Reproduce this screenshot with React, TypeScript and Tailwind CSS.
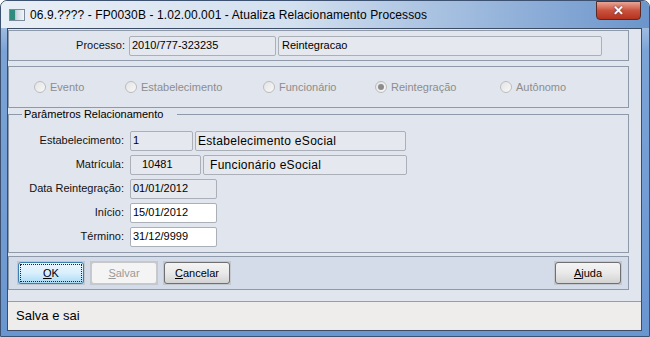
import React from 'react';

const font = { fontFamily: '"Liberation Sans", Arial, sans-serif' };

// Read-only / editable text box
function Box({
  w,
  value,
  white = false,
  big = false,
  className = '',
}: {
  w: string;
  value: string;
  white?: boolean;
  big?: boolean;
  className?: string;
}) {
  return (
    <div
      className={`${w} h-[20px] flex items-center rounded-[2px] border border-[#abb0b8] px-[2px] text-black ${
        white ? 'bg-white' : 'bg-[#e5e8ee]'
      } ${big ? 'text-[12px] tracking-[0.3px]' : 'text-[11px]'} ${className}`}
    >
      {value}
    </div>
  );
}

function Radio({ label, checked = false, w }: { label: string; checked?: boolean; w: string }) {
  return (
    <div className={`${w} flex items-center gap-[4px]`}>
      <span className="w-[12px] h-[12px] rounded-full border border-[#bcbcbc] bg-gradient-to-br from-[#e4e4e4] to-[#f8f8f8] flex items-center justify-center">
        {checked && <span className="w-[6px] h-[6px] rounded-full bg-[#8c8c8c]" />}
      </span>
      <span className="text-[11px] text-[#8d8d8d]">{label}</span>
    </div>
  );
}

function Field({ label, children }: { label: string; children: React.ReactNode }) {
  return (
    <div className="flex items-center h-[20px]">
      <span className="w-[116px] text-right text-[11px] text-[#111] pr-[1px]">{label}</span>
      <div className="flex items-center gap-[2px] ml-[5px]">{children}</div>
    </div>
  );
}

function Btn({
  label,
  u,
  focused = false,
  disabled = false,
}: {
  label: string;
  u: number;
  focused?: boolean;
  disabled?: boolean;
}) {
  const text = (
    <>
      {label.slice(0, u)}
      <span className="underline">{label[u]}</span>
      {label.slice(u + 1)}
    </>
  );
  return (
    <div className="p-[1px] bg-[#c3c7ce]">
      <div
        className={`w-[66px] h-[22px] rounded-[3px] border flex items-center justify-center text-[11px] ${
          focused
            ? 'border-[#3c7fb1] bg-gradient-to-b from-[#eaf6fd] via-[#d9effc] to-[#a9dbf6] text-black'
            : disabled
            ? 'border-[#c9c9c9] bg-[#f4f4f4] text-[#9a9a9a]'
            : 'border-[#707070] bg-gradient-to-b from-[#f4f4f4] via-[#e9e9e9] to-[#d3d3d3] text-black'
        }`}
      >
        {focused ? (
          <span className="w-[62px] h-[18px] border border-dotted border-[#222] flex items-center justify-center">
            {text}
          </span>
        ) : (
          text
        )}
      </div>
    </div>
  );
}

export default function App() {
  return (
    <div
      className="w-[650px] h-[337px] overflow-hidden rounded-t-[7px] border border-[#3d5270] bg-gradient-to-b from-[#c9d8ec] via-[#7ba3d6] via-15% to-[#6a96d0] flex flex-col"
      style={font}
    >
      {/* Title bar */}
      <div className="h-[27px] shrink-0 flex items-center relative bg-gradient-to-r from-[#e9eff6] via-[#d3e0ef] via-45% to-[#6b95cb]">
        <div className="ml-[8px] w-[16px] h-[12px] border border-[#7d8a99] bg-gradient-to-r from-[#3e9a8a] via-[#cfd9e4] to-[#f3f6f9] flex">
          <span className="w-[5px] h-full bg-[#2f8b7c]" />
        </div>
        <span className="ml-[5px] text-[12px] text-black tracking-[0.1px]">
          06.9.???? - FP0030B - 1.02.00.001 - Atualiza Relacionamento Processos
        </span>
        <div className="ml-auto mr-[8px] mb-[7px] self-start w-[45px] h-[19px] rounded-b-[4px] border border-[#5a2a24] bg-gradient-to-b from-[#e8a595] via-[#c9523e] to-[#b5321d] flex items-center justify-center">
          <span className="text-white text-[13px] font-bold leading-none [text-shadow:0_0_2px_#333]">✕</span>
        </div>
      </div>

      {/* Client area */}
      <div className="ml-[6px] w-[635px] h-[303px] border border-[#3b4c64] bg-[#e1e5ee] flex flex-col">
        {/* Processo */}
        <div className="mt-[1px] w-[621px] h-[31px] border border-[#8e99aa] flex items-center">
          <span className="w-[116px] text-right text-[11px] text-[#111]">Processo:</span>
          <div className="ml-[4px] flex gap-[2px]">
            <Box w="w-[147px]" value="2010/777-323235" />
            <Box w="w-[324px]" value="Reintegracao" className="pl-[3px]" />
          </div>
        </div>

        {/* Tipo */}
        <div className="mt-[5px] w-[621px] h-[42px] border border-[#8e99aa] flex items-center pl-[25px]">
          <Radio w="w-[91px]" label="Evento" />
          <Radio w="w-[138px]" label="Estabelecimento" />
          <Radio w="w-[112px]" label="Funcionário" />
          <Radio w="w-[125px]" label="Reintegração" checked />
          <Radio w="w-[100px]" label="Autônomo" />
        </div>

        {/* Parâmetros */}
        <fieldset className="mt-[-2px] w-[621px] h-[147px] border border-[#8e99aa]">
          <legend className="ml-[13px] pl-[2px] pr-[14px] text-[11px] text-black">Parâmetros Relacionamento</legend>
          <div className="mt-[8px] flex flex-col gap-[4px]">
            <Field label="Estabelecimento:">
              <Box w="w-[63px]" value="1" />
              <Box w="w-[211px]" value="Estabelecimento eSocial" big />
            </Field>
            <Field label="Matrícula:">
              <Box w="w-[71px]" value="10481" className="pl-[11px]" />
              <Box w="w-[204px]" value="Funcionário eSocial" big className="pl-[6px]" />
            </Field>
            <Field label="Data Reintegração:">
              <Box w="w-[87px]" value="01/01/2012" />
            </Field>
            <Field label="Início:">
              <Box w="w-[87px]" value="15/01/2012" white />
            </Field>
            <Field label="Término:">
              <Box w="w-[87px]" value="31/12/9999" white />
            </Field>
          </div>
        </fieldset>

        {/* Buttons */}
        <div className="mt-[3px] w-[621px] h-[34px] border border-[#8e99aa] bg-[#d4dcea] flex items-center px-[8px] gap-[5px]">
          <Btn label="OK" u={0} focused />
          <Btn label="Salvar" u={0} disabled />
          <Btn label="Cancelar" u={0} />
          <div className="ml-auto mr-[-2px]">
            <Btn label="Ajuda" u={0} />
          </div>
        </div>

        {/* Status bar */}
        <div className="mt-auto h-[29px] border-t border-[#9c9c9c] bg-[#efedec] flex items-center pl-[8px]">
          <span className="text-[13px] text-black">Salva e sai</span>
        </div>
      </div>
    </div>
  );
}
